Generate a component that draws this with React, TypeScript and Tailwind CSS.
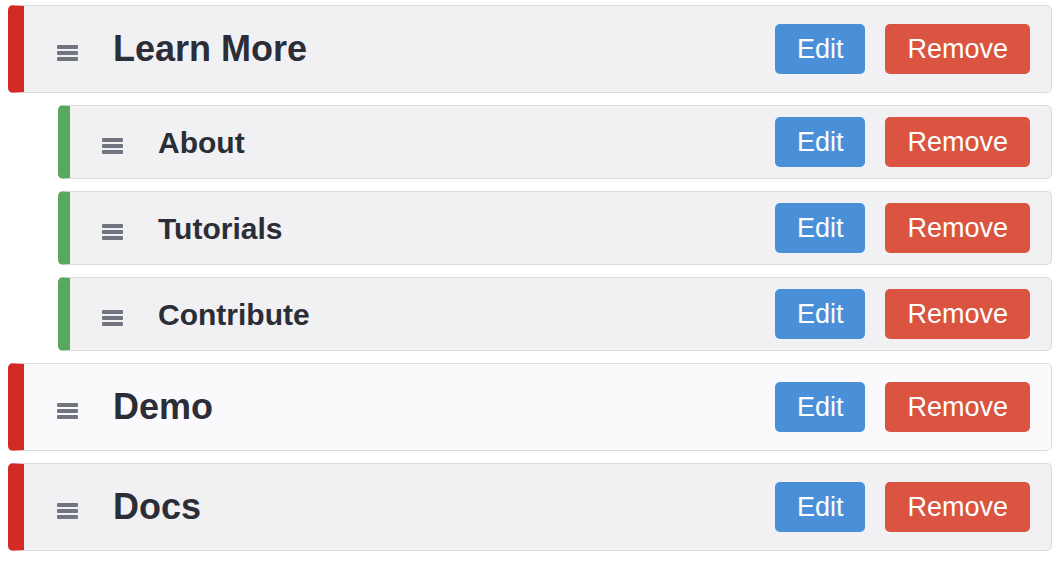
import React from "react";

interface MenuItem {
  id: string;
  title: string;
  child?: boolean;
  light?: boolean;
}

const items: MenuItem[] = [
  { id: "learn", title: "Learn More" },
  { id: "about", title: "About", child: true },
  { id: "tutorials", title: "Tutorials", child: true },
  { id: "contribute", title: "Contribute", child: true },
  { id: "demo", title: "Demo", light: true },
  { id: "docs", title: "Docs" },
];

// drag handle, three stacked bars
const Handle = () => (
  <span className="flex flex-col gap-[2px] w-[21px] shrink-0 mt-[7px]">
    <span className="h-[4px] bg-[#70757f] rounded-[1px]" />
    <span className="h-[4px] bg-[#70757f] rounded-[1px]" />
    <span className="h-[4px] bg-[#70757f] rounded-[1px]" />
  </span>
);

const Row = ({ item }: { item: MenuItem }) => {
  const bar = item.child
    ? "ml-[50px] h-[74px] border-l-[12px] border-l-[#5aa85e] pl-[32px]"
    : "h-[88px] border-l-[16px] border-l-[#d22b26] pl-[33px]";
  const bg = item.light ? "bg-[#fafafc]" : "bg-[#f1f1f3]";
  return (
    <div
      className={`flex items-center border border-[#dcdcdf] rounded-[5px] pr-[21px] ${bar} ${bg}`}
    >
      <Handle />
      <h3
        className={`font-bold ml-[35px] text-[#2b2d37] flex-1 ${
          item.child ? "text-[30px]" : "text-[36px]"
        }`}
      >
        {item.title}
      </h3>
      <div className="flex gap-[20px]">
        <button className="text-white text-[27px] bg-[#4a90d9] h-[50px] px-[22px] rounded-[5px]">
          Edit
        </button>
        <button className="text-white text-[27px] bg-[#da5441] h-[50px] px-[22px] rounded-[5px]">
          Remove
        </button>
      </div>
    </div>
  );
};

export default function App() {
  return (
    <div className="bg-white min-h-[565px] pt-[5px] px-[8px] flex flex-col gap-[12px] font-['Liberation_Sans',Arial,sans-serif]">
      {items.map((item) => (
        <Row key={item.id} item={item} />
      ))}
    </div>
  );
}
